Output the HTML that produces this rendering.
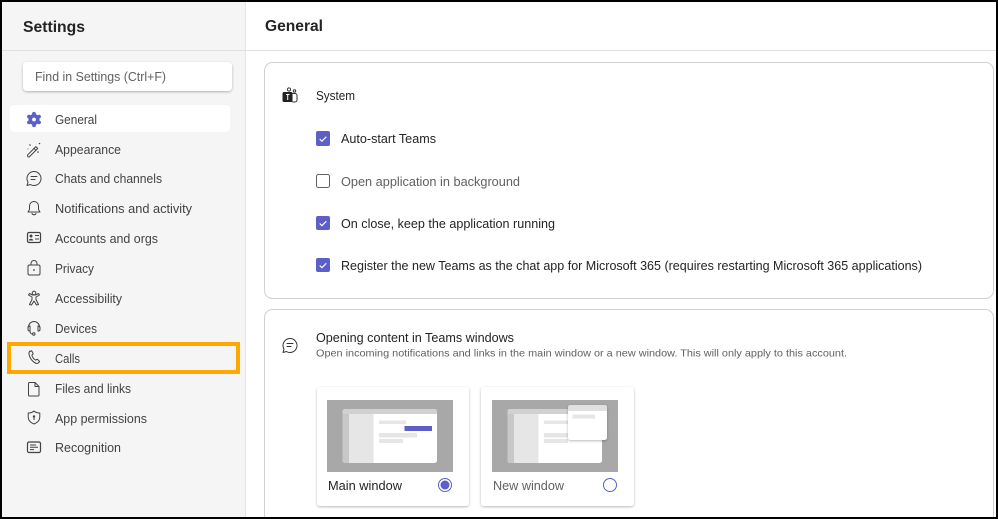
<!DOCTYPE html>
<html><head><meta charset="utf-8"><title>Settings</title>
<style>
html,body{margin:0;padding:0;background:#000;overflow:hidden}
svg{display:block}
text{font-family:"Liberation Sans",sans-serif;font-size:13px;fill:#424242}
.m{fill:#242424}
.g{fill:#616161}
.i{fill:none;stroke:#424242;stroke-width:1;stroke-linecap:round;stroke-linejoin:round}
.soft{filter:blur(.3px)}
</style></head>
<body>
<svg width="998" height="519" viewBox="0 0 998 519" xmlns="http://www.w3.org/2000/svg">
<defs>
<filter id="s" x="-10%" y="-10%" width="120%" height="125%"><feDropShadow dx="0" dy="1" stdDeviation="1.3" flood-color="#000" flood-opacity=".28"/></filter>
<clipPath id="pg"><rect x="2" y="2" width="994" height="515"/></clipPath>
</defs>
<rect width="998" height="519" fill="#000"/>
<g clip-path="url(#pg)">
<g class="soft">
<rect x="2" y="2" width="994" height="515" fill="#fff"/>
<rect x="2" y="2" width="243" height="515" fill="#f5f5f5"/>
<rect x="245" y="2" width="1" height="515" fill="#e4e4e4"/>
<rect x="2" y="50" width="994" height="1" fill="#e0e0e0"/>

<text x="23" y="32" textLength="62" lengthAdjust="spacingAndGlyphs" style="font-size:16px;font-weight:700;fill:#242424">Settings</text>
<text x="265" y="31" textLength="58" lengthAdjust="spacingAndGlyphs" style="font-size:15.5px;font-weight:700;fill:#242424">General</text>

<rect x="23" y="62" width="209" height="29" rx="4" fill="#fff" filter="url(#s)"/>
<text x="35" y="81" textLength="131" lengthAdjust="spacingAndGlyphs" class="g">Find in Settings (Ctrl+F)</text>

<rect x="10" y="105" width="220" height="27" rx="4" fill="#fff"/>

<text x="55" y="124" textLength="42" lengthAdjust="spacingAndGlyphs">General</text>
<text x="55" y="154" textLength="66" lengthAdjust="spacingAndGlyphs">Appearance</text>
<text x="55" y="183" textLength="107" lengthAdjust="spacingAndGlyphs">Chats and channels</text>
<text x="55" y="213" textLength="137" lengthAdjust="spacingAndGlyphs">Notifications and activity</text>
<text x="55" y="243" textLength="103" lengthAdjust="spacingAndGlyphs">Accounts and orgs</text>
<text x="55" y="273" textLength="39" lengthAdjust="spacingAndGlyphs">Privacy</text>
<text x="55" y="303" textLength="67" lengthAdjust="spacingAndGlyphs">Accessibility</text>
<text x="55" y="333" textLength="42" lengthAdjust="spacingAndGlyphs">Devices</text>
<text x="55" y="363" textLength="25" lengthAdjust="spacingAndGlyphs">Calls</text>
<text x="55" y="393" textLength="76" lengthAdjust="spacingAndGlyphs">Files and links</text>
<text x="55" y="423" textLength="92" lengthAdjust="spacingAndGlyphs">App permissions</text>
<text x="55" y="452" textLength="66" lengthAdjust="spacingAndGlyphs">Recognition</text>

<!-- General gear -->
<g fill="#5b5fc7">
<circle cx="34" cy="119.500" r="5.500"/>
<circle cx="34" cy="113.800" r="1.900"/><circle cx="34" cy="125.200" r="1.900"/>
<circle cx="29" cy="116.600" r="1.900"/><circle cx="39" cy="116.600" r="1.900"/>
<circle cx="29" cy="122.400" r="1.900"/><circle cx="39" cy="122.400" r="1.900"/>
</g>
<circle cx="34" cy="119.500" r="1.900" fill="#fff"/>
<!-- Appearance wand -->
<g class="i"><path d="M28 157l-.6-1.800 8.400-8.600 1.900 1.900-8.400 8.400z"/><path d="M34 148.400l1.900 1.900"/></g>
<g fill="#424242"><circle cx="30" cy="145" r=".8"/><circle cx="39.500" cy="143.500" r=".8"/><circle cx="38" cy="152" r=".8"/><circle cx="28" cy="149" r=".5"/></g>
<!-- Chat -->
<g class="i"><path d="M34 171.500a7 7 0 1 1-3.600 13l-3.400 1 1-3.400a7 7 0 0 1 6-10.600z"/><path d="M31 176.500h6M31 179.500h4"/></g>
<!-- Bell -->
<g class="i"><path d="M28 212h12l-1.500-2.500v-3.500a4.500 4.500 0 0 0-9 0v3.500z"/><path d="M32 213.500a2.200 2.200 0 0 0 4 0"/></g>
<!-- Accounts -->
<rect x="27.500" y="232.500" width="13" height="10" rx="1.500" fill="none" stroke="#424242" stroke-width="1.200"/>
<circle cx="31" cy="236" r="1.500" fill="#424242"/><path d="M28.800 240.500c0-2.400 4.400-2.400 4.400 0z" fill="#424242"/>
<path d="M35 235.500h4M35 239h4" stroke="#424242" fill="none"/>
<!-- Privacy -->
<g class="i"><rect x="28" y="265" width="12" height="10" rx="1.500"/><path d="M31 265v-1.500a3 3 0 0 1 6 0v1.500"/></g>
<circle cx="34" cy="270" r=".9" fill="#424242"/>
<!-- Accessibility -->
<g class="i"><circle cx="34" cy="293" r="1.800"/><path d="M28.500 295l3.500 2v2.500l-2.500 5 2 .5 2.500-4 2.500 4 2-.5-2.500-5v-2.500l3.500-2-1-1.500-3 1.500h-3l-3-1.500z"/></g>
<!-- Devices headset -->
<g class="i"><path d="M28.500 327a5.500 5.500 0 0 1 11 0"/><path d="M30 326h-.5a1.500 1.500 0 0 0-1.500 1.500v2a1.500 1.500 0 0 0 1.500 1.500h.5zM38 326h.5a1.500 1.500 0 0 1 1.500 1.500v2a1.500 1.500 0 0 1-1.500 1.500h-.5z"/><path d="M30 331c0 1.800 1 3 2.500 3"/><circle cx="33.800" cy="334" r="1.200"/></g>
<!-- Calls -->
<path class="i" d="M30 351.500l1.700-.7 1.500 3-1.300 1.300c.3 2 2 4.300 3.800 5l1.600-.9 2.300 2.300-1.300 1.500c-.8.500-2 .5-3 0-3-1.500-5.800-5-6.300-8.800-.2-1.300.2-2.500 1-3.200z"/>
<!-- Files -->
<path class="i" d="M29.500 382.500h5.500l4 4v8.500a1 1 0 0 1-1 1h-8.500a1 1 0 0 1-1-1v-11.500a1 1 0 0 1 1-1z"/><path class="i" d="M35 382.500v4h4"/>
<!-- App permissions -->
<path class="i" d="M34 411c1.500 1.500 3.500 2 5.800 2v4c0 3.600-2.300 5.600-5.800 7-3.500-1.400-5.800-3.400-5.800-7v-4c2.300 0 4.300-.5 5.800-2z"/>
<circle cx="34" cy="416.500" r="1.200" fill="#424242"/><path d="M34 416.500v3.500" stroke="#424242" fill="none"/>
<!-- Recognition -->
<rect x="27.500" y="442" width="13" height="10.500" rx="1.500" fill="none" stroke="#424242" stroke-width="1.200"/>
<path d="M30 445h6M30 447.300h8M30 449.600h4" stroke="#424242" fill="none"/>

<!-- Orange highlight -->
<rect x="9" y="344" width="229" height="28" fill="none" stroke="#ffa800" stroke-width="4"/>

<!-- Cards -->
<rect x="264.500" y="62.500" width="729" height="236" rx="8" fill="#fff" stroke="#d1d1d1"/>
<path d="M264.500 517v-199.500a8 8 0 0 1 8-8h713a8 8 0 0 1 8 8v199.500" fill="#fff" stroke="#d1d1d1"/>

<!-- Teams icon -->
<circle cx="289" cy="89.500" r="1.600" fill="none" stroke="#333"/>
<circle cx="294.500" cy="91" r="1.200" fill="none" stroke="#333"/>
<rect x="291" y="93.500" width="6" height="8.500" rx="2" fill="none" stroke="#333"/>
<rect x="282.500" y="92" width="10" height="10" rx="1.500" fill="#222"/>
<rect x="286" y="94" width="3.500" height="1" fill="#fff"/><rect x="287.200" y="94" width="1" height="6" fill="#fff"/>

<text x="316" y="100" textLength="39" lengthAdjust="spacingAndGlyphs" class="m">System</text>

<!-- Checkboxes -->
<rect x="316" y="131" width="14" height="15" rx="2" fill="#5b5fc7"/>
<path d="M319.700 139l2.200 2.200 4.400-4.400" fill="none" stroke="#fff" stroke-width="1.200"/>
<text x="341" y="143" textLength="95" lengthAdjust="spacingAndGlyphs" class="m">Auto-start Teams</text>

<rect x="316.500" y="174.500" width="13" height="13" rx="2" fill="#fff" stroke="#616161"/>
<text x="341" y="186" textLength="179" lengthAdjust="spacingAndGlyphs" class="g">Open application in background</text>

<rect x="316" y="216" width="14" height="14" rx="2" fill="#5b5fc7"/>
<path d="M319.700 223.500l2.200 2.200 4.400-4.400" fill="none" stroke="#fff" stroke-width="1.200"/>
<text x="341" y="228" textLength="214" lengthAdjust="spacingAndGlyphs" class="m">On close, keep the application running</text>

<rect x="316" y="258" width="14" height="14" rx="2" fill="#5b5fc7"/>
<path d="M319.700 265.500l2.200 2.200 4.400-4.400" fill="none" stroke="#fff" stroke-width="1.200"/>
<text x="341" y="270" textLength="581" lengthAdjust="spacingAndGlyphs" class="m">Register the new Teams as the chat app for Microsoft 365 (requires restarting Microsoft 365 applications)</text>

<!-- Opening content -->
<g class="i" style="stroke:#333"><path d="M290 338.500a7 7 0 1 1-3.600 13l-3.400 1 1-3.400a7 7 0 0 1 6-10.600z"/><path d="M287 343.500h6M287 346.500h4"/></g>
<text x="316" y="342" textLength="198" lengthAdjust="spacingAndGlyphs" class="m">Opening content in Teams windows</text>
<text x="316" y="356.500" textLength="531" lengthAdjust="spacingAndGlyphs" class="g" style="font-size:10.500px">Open incoming notifications and links in the main window or a new window. This will only apply to this account.</text>

<!-- Window option 1 -->
<rect x="317" y="387" width="152" height="119" rx="3" fill="#fff" filter="url(#s)"/>
<rect x="327" y="400" width="126" height="72" fill="#a8a8a8"/>
<rect x="342.500" y="409" width="94.500" height="54" rx="2.500" fill="#fff"/>
<path d="M342.500 414v-2.500a2.500 2.500 0 0 1 2.500-2.500h89.500a2.500 2.500 0 0 1 2.500 2.500v2.500z" fill="#d1d1d1"/>
<path d="M342.500 414h6.500v49h-4a2.500 2.500 0 0 1-2.500-2.500z" fill="#c8c8c8"/>
<rect x="349" y="414" width="24.500" height="49" fill="#e6e6e6"/>
<rect x="379" y="420.500" width="27" height="3.500" fill="#e6e6e6"/>
<rect x="404.500" y="426" width="27.500" height="5" fill="#5b5fc7"/>
<rect x="379" y="433" width="38" height="4.500" fill="#e6e6e6"/>
<rect x="379" y="439" width="24" height="4" fill="#e6e6e6"/>
<text x="328" y="490" textLength="74" lengthAdjust="spacingAndGlyphs" class="m">Main window</text>
<circle cx="445" cy="485" r="6.500" fill="#fff" stroke="#5b5fc7"/>
<circle cx="445" cy="485" r="4.500" fill="#5b5fc7"/>

<!-- Window option 2 -->
<rect x="481" y="387" width="153" height="119" rx="3" fill="#fff" filter="url(#s)"/>
<rect x="492" y="400" width="126" height="72" fill="#a8a8a8"/>
<rect x="507.500" y="409" width="94.500" height="54" rx="2.500" fill="#fff"/>
<path d="M507.500 414v-2.500a2.500 2.500 0 0 1 2.500-2.500h89.500a2.500 2.500 0 0 1 2.500 2.500v2.500z" fill="#d1d1d1"/>
<path d="M507.500 414h6.500v49h-4a2.500 2.500 0 0 1-2.500-2.500z" fill="#c8c8c8"/>
<rect x="514" y="414" width="24.500" height="49" fill="#e6e6e6"/>
<rect x="544" y="420.500" width="27" height="3.500" fill="#e6e6e6"/>
<rect x="544" y="433" width="38" height="4.500" fill="#e6e6e6"/>
<rect x="544" y="439" width="24" height="4" fill="#e6e6e6"/>
<rect x="568" y="405" width="39" height="35" rx="2.500" fill="#fff" filter="url(#s)"/>
<path d="M568 411v-3.500a2.500 2.500 0 0 1 2.500-2.500h34a2.500 2.500 0 0 1 2.500 2.500v3.500z" fill="#e0e0e0"/>
<rect x="572.500" y="414.500" width="22.500" height="4" fill="#e6e6e6"/>
<text x="493" y="490" textLength="71" lengthAdjust="spacingAndGlyphs" class="g">New window</text>
<circle cx="610" cy="485" r="6.500" fill="#fff" stroke="#5b5fc7"/>
</g>
</g>
</svg>
</body></html>
